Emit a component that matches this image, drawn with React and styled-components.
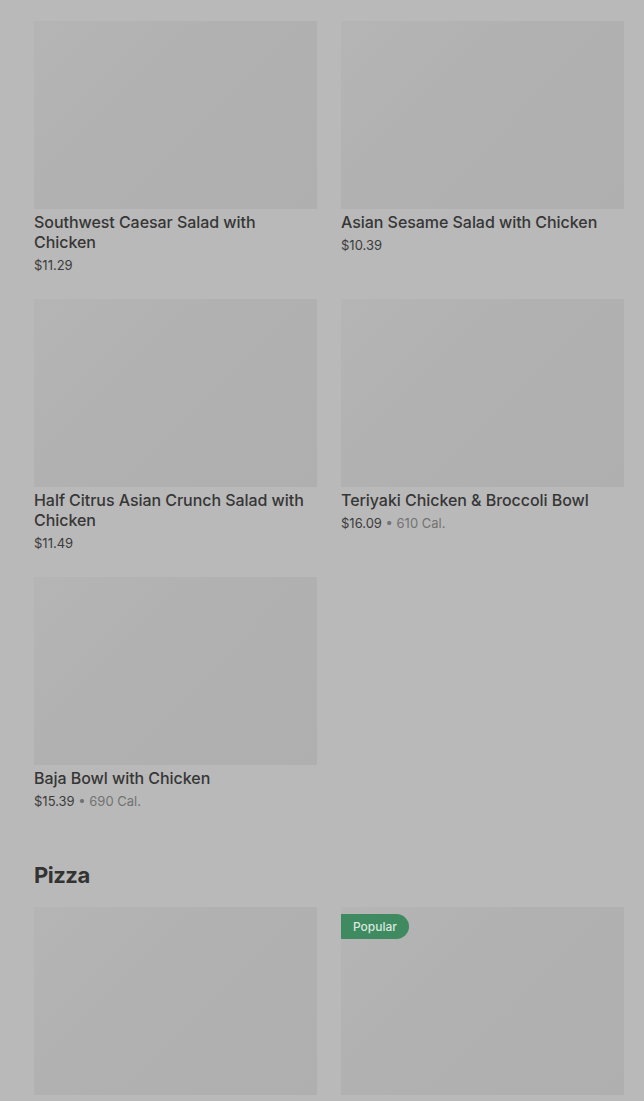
import React from "react";
import styled, { createGlobalStyle } from "styled-components";

const GlobalStyle = createGlobalStyle`
  html, body {
    margin: 0;
    padding: 0;
    background: #b9b9b9;
    overflow: hidden;
  }
  body {
    font-family: Inter, "Liberation Sans", Arial, sans-serif;
    color: #353535;
  }
`;

const Page = styled.div`
  height: 1101px;
  overflow: hidden;
  padding: 21px 20px 0 34px;
  box-sizing: border-box;
`;

const Section = styled.section`
  & + & {
    margin-top: 48px;
  }
`;

const Heading = styled.h2`
  margin: 0 0 16px;
  font-size: 22px;
  line-height: 32px;
  font-weight: 700;
  color: #333;
  letter-spacing: -0.5px;
`;

const Grid = styled.div`
  display: grid;
  grid-template-columns: repeat(2, 283px);
  column-gap: 24px;
  row-gap: 24px;
`;

const Card = styled.div`
  display: flex;
  flex-direction: column;
`;

const Thumb = styled.div`
  position: relative;
  height: 188px;
  background: linear-gradient(135deg, #b5b5b5 0%, #b1b1b1 40%, #afafaf 100%);
`;

const Badge = styled.span`
  position: absolute;
  top: 7px;
  left: 0;
  height: 25px;
  padding: 0 12px;
  display: flex;
  align-items: center;
  background: #3f8a60;
  color: #d9e8df;
  font-size: 12px;
  font-weight: 500;
  border-radius: 0 13px 13px 0;
`;

const Title = styled.div`
  margin-top: 3px;
  font-size: 16px;
  line-height: 20px;
  font-weight: 500;
  color: #363636;
  letter-spacing: -0.05px;
`;

const Meta = styled.div`
  margin-top: 3px;
  font-size: 13px;
  line-height: 20px;
  color: #3c3c3c;
`;

const Cal = styled.span`
  color: #727272;
`;

const salads = [
  { name: "Southwest Caesar Salad with Chicken", price: "$11.29" },
  { name: "Asian Sesame Salad with Chicken", price: "$10.39" },
  { name: "Half Citrus Asian Crunch Salad with Chicken", price: "$11.49" },
  { name: "Teriyaki Chicken & Broccoli Bowl", price: "$16.09", cal: "610 Cal." },
  { name: "Baja Bowl with Chicken", price: "$15.39", cal: "690 Cal." },
];

const pizzas = [
  { name: "Wood-Fired Margherita Flatbread Pizza", price: "$13.49" },
  { name: "Pepperoni Flatbread Pizza", price: "$13.99", popular: true },
];

function Item({ item }) {
  return (
    <Card>
      <Thumb>{item.popular && <Badge>Popular</Badge>}</Thumb>
      <Title>{item.name}</Title>
      <Meta>
        {item.price}
        {item.cal && <Cal> • {item.cal}</Cal>}
      </Meta>
    </Card>
  );
}

export default function App() {
  return (
    <>
      <GlobalStyle />
      <Page>
        <Section>
          <Grid>
            {salads.map((s, i) => <Item item={s} key={i} />)}
          </Grid>
        </Section>
        <Section>
          <Heading>Pizza</Heading>
          <Grid>
            {pizzas.map((p, i) => <Item item={p} key={i} />)}
          </Grid>
        </Section>
      </Page>
    </>
  );
}
